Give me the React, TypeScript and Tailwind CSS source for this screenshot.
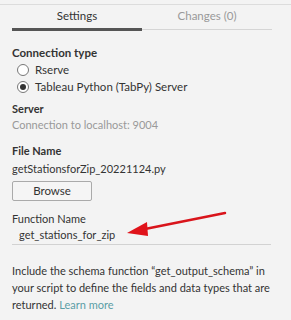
import React from 'react';

export default function App() {
  return (
    <div className="w-[291px] h-[320px] bg-[#f3f3f3] overflow-hidden relative text-[11px] text-[#333]" style={{ fontFamily: 'Lato, "Noto Sans", sans-serif' }}>
      <div className="h-[5px] border-b border-[#dcdcdc]" />
      {/* Tabs */}
      <div className="flex px-[12px] pt-[3px]">
        <div className="flex-1 flex flex-col items-center">
          <span className="text-[11.5px] leading-[16px] text-[#333]">Settings</span>
          <div className="mt-[4px] w-full h-[3px] bg-[#555]" />
        </div>
        <div className="flex-1 flex flex-col items-center">
          <span className="text-[11.5px] leading-[16px] text-[#999]">Changes (0)</span>
          <div className="mt-[5px] w-full h-[1px] bg-[#d5d5d5] mb-[1px]" />
        </div>
        <div className="w-[7px]" />
      </div>

      <div className="px-[12px] pt-[14px]">
        <div className="font-bold text-[11.5px] leading-[16px]">Connection type</div>
        <div className="flex flex-col pl-[5px] text-[11.5px]">
          <label className="flex items-center gap-[6px] leading-[17px]">
            <span className="w-[12px] h-[12px] rounded-full border border-[#777] bg-white" />
            <span>Rserve</span>
          </label>
          <label className="flex items-center gap-[6px] leading-[17px]">
            <span className="w-[12px] h-[12px] rounded-full border border-[#777] bg-white flex items-center justify-center">
              <span className="w-[6px] h-[6px] rounded-full bg-[#333]" />
            </span>
            <span>Tableau Python (TabPy) Server</span>
          </label>
        </div>

        <div className="mt-[6px] font-bold leading-[16px]">Server</div>
        <div className="leading-[16px] text-[#999]">Connection to localhost: 9004</div>

        <div className="mt-[10px] font-bold leading-[16px]">File Name</div>
        <div className="mt-[2px] leading-[16px]">getStationsforZip_20221124.py</div>
        <button className="mt-[4px] w-[80px] h-[20px] border border-[#aaa] rounded-[2px] bg-[#f5f5f5] text-[11.5px] leading-[16px] text-[#333]">Browse</button>

        <div className="mt-[10px] leading-[16px]">Function Name</div>
        <div className="pl-[7px] leading-[16px] pb-[1px] border-b border-[#d2d2d2] mr-[8px]">get_stations_for_zip</div>

        <p className="mt-[17px] leading-[17px] pr-[4px]">
          Include the schema function “get_output_schema” in your script to define the fields and data types that are returned. <span className="text-[#5b9ea6]">Learn more</span>
        </p>
      </div>

      <svg className="absolute left-0 top-0" width="291" height="320">
        <line x1="225" y1="213" x2="140" y2="230" stroke="#d9141b" strokeWidth="2.5" strokeLinecap="round" />
        <polygon points="127,233 147,222 148,236" fill="#e0131a" />
      </svg>
    </div>
  );
}
